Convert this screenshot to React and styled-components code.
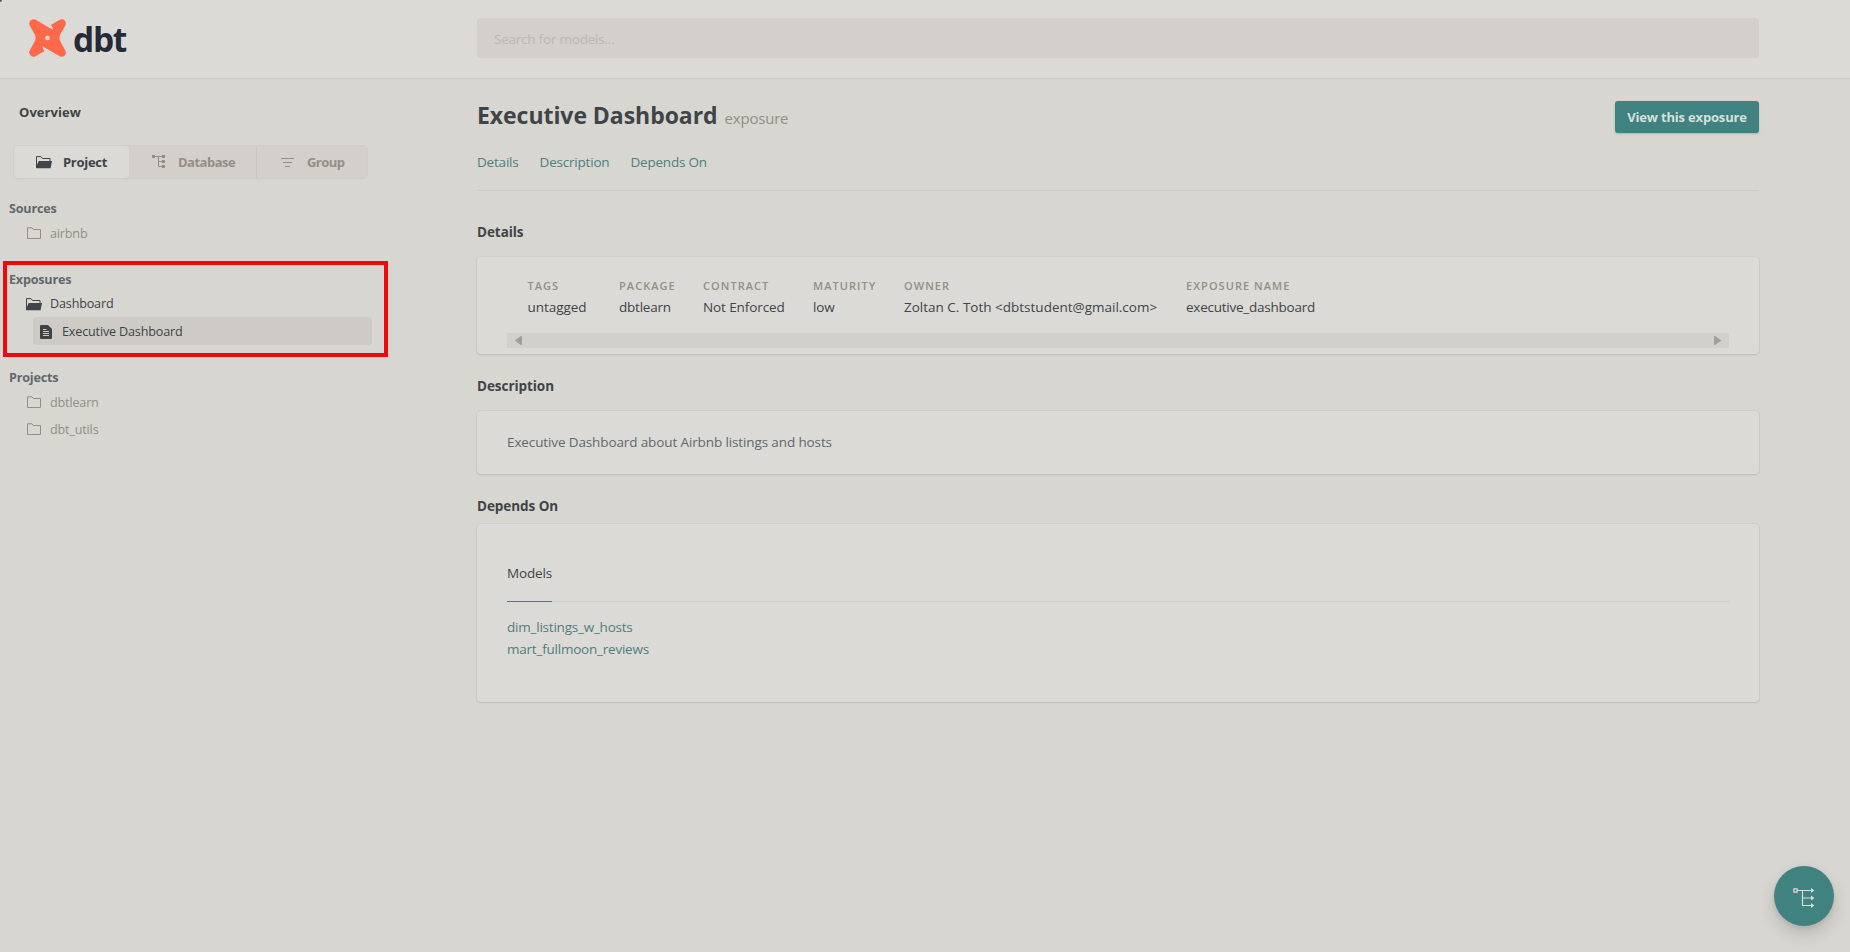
import React from "react";
import styled, { createGlobalStyle } from "styled-components";

const c = {
  page: "#d7d6d1",
  panel: "#dbdad6",
  line: "#cdccc7",
  muted: "#d3cfcb",
  dark: "#404446",
  slate: "#62686b",
  gray: "#948e85",
  teal: "#3f8280",
  link: "#4f7e7c",
};

const GlobalStyle = createGlobalStyle`
  * { box-sizing: border-box; }
  body {
    margin: 0;
    background: ${c.page};
    color: ${c.dark};
    font: 400 13.5px/20px "Open Sans", "Noto Sans", sans-serif;
    letter-spacing: -0.14px;
    overflow: hidden;
  }
`;

const Page = styled.div`
  height: 952px;
  display: flex;
  flex-direction: column;
`;
const WindowCorner = styled.span`
  position: absolute;
  left: 0;
  top: 0;
  width: 2px;
  height: 2px;
  background: #55555a;
  border-bottom-right-radius: 2px;
`;
const Header = styled.header`
  display: flex;
  height: 79px;
  flex: none;
  padding: 18px 0 0 29px;
  background: ${c.panel};
  border-bottom: 1px solid ${c.line};
`;
const Brand = styled.div`
  display: flex;
  width: 448px;
  gap: 7px;
  svg { margin-top: 1px; }
`;
const Wordmark = styled.span`
  margin-top: -2px;
  font-size: 33.5px;
  line-height: 46px;
  font-weight: 700;
  letter-spacing: -1.3px;
  color: #262a38;
`;
const Search = styled.div`
  width: 1282px;
  height: 40px;
  padding: 0 17px;
  border-radius: 4px;
  background: ${c.muted};
  color: #bab8b3;
  line-height: 43px;
  letter-spacing: -0.22px;
`;
const Body = styled.div`
  flex: 1;
  display: flex;
`;
const Sidebar = styled.aside`
  width: 477px;
  flex: none;
`;
const Overview = styled.div`
  margin: 23px 0 24px 19px;
  font-weight: 700;
  font-size: 13px;
  letter-spacing: 0.05px;
`;
const Tabs = styled.div`
  display: flex;
  width: 353px;
  height: 32px;
  margin-left: 14px;
  border-radius: 4px;
  background: ${c.muted};
  box-shadow: 0 0 0 1px #cfcec9, 0 1px 2px rgba(60, 50, 40, 0.08);
`;
const Tab = styled.div`
  display: flex;
  align-items: center;
  width: ${(p) => p.$width}px;
  padding-left: ${(p) => p.$inset}px;
  gap: ${(p) => p.$gap}px;
  border-radius: ${(p) => (p.$active ? "4px" : "0")};
  border-right: ${(p) => (p.$divided ? "1px solid #c9c7c2" : "none")};
  background: ${(p) => (p.$active ? c.panel : "transparent")};
  color: ${(p) => (p.$active ? c.dark : c.gray)};
  font-size: 13px;
  font-weight: 700;
  letter-spacing: ${(p) => p.$track}px;
  svg { flex: none; }
`;
const Group = styled.section`
  position: relative;
  padding-top: ${(p) => p.$top}px;
`;
const GroupTitle = styled.div`
  height: 22px;
  line-height: 22px;
  padding-left: 9px;
  color: ${c.slate};
  font-size: 12.6px;
  font-weight: 700;
  letter-spacing: -0.2px;
`;
const Item = styled.div`
  display: flex;
  align-items: center;
  width: fit-content;
  height: ${(p) => (p.$open ? 26 : 27)}px;
  margin-left: 26px;
  gap: 8px;
  color: ${(p) => (p.$open ? c.dark : c.gray)};
  font-size: 12.6px;
  letter-spacing: -0.17px;
  svg { flex: none; }
`;
const ActiveItem = styled(Item)`
  width: 339px;
  height: 28px;
  margin-left: 33px;
  padding: 2px 0 0 7px;
  gap: 10px;
  border-radius: 4px;
  background: #cecac5;
`;
const Highlight = styled.div`
  position: absolute;
  left: 3px;
  top: 14px;
  width: 385px;
  height: 96px;
  border: 4px solid #ee0a08;
`;
const Main = styled.main`
  width: 1282px;
  flex: none;
`;
const TitleRow = styled.div`
  display: flex;
  justify-content: space-between;
  height: 54px;
  padding-top: 18px;
`;
const Title = styled.h1`
  margin: 0;
  font-size: 23px;
  line-height: 36px;
  font-weight: 700;
  letter-spacing: -0.05px;
`;
const Kind = styled.small`
  margin-left: 7px;
  font-size: 15px;
  line-height: 1;
  font-weight: 400;
  letter-spacing: -0.2px;
  color: ${c.gray};
`;
const Button = styled.div`
  width: 144px;
  height: 32px;
  margin-top: 4px;
  border-radius: 3px;
  background: ${c.teal};
  color: #d5e0db;
  font-size: 13px;
  font-weight: 700;
  line-height: 32px;
  letter-spacing: -0.17px;
  text-align: center;
  box-shadow: 0 1px 2px rgba(60, 90, 90, 0.25);
`;
const Nav = styled.nav`
  display: flex;
  gap: 21px;
  height: 58px;
  padding-top: 19px;
  border-bottom: 1px solid ${c.line};
  color: ${c.link};
  letter-spacing: -0.2px;
`;
const Heading = styled.h6`
  margin: 0;
  height: 20px;
  margin-top: ${(p) => p.$top}px;
  margin-bottom: ${(p) => p.$bottom}px;
  font-size: 13.5px;
  line-height: 20px;
  font-weight: 700;
  letter-spacing: -0.06px;
`;
const Panel = styled.div`
  height: ${(p) => p.$height}px;
  padding: ${(p) => p.$pad}px 30px 0;
  border-radius: 4px;
  background: ${c.panel};
  box-shadow: 0 0 0 1px rgba(60, 50, 40, 0.04), 0 1px 2px rgba(60, 50, 40, 0.12);
`;
const Fields = styled.dl`
  display: grid;
  grid-template-columns: 91.5px 84px 110px 91px 282px auto;
  margin: 0 0 0 20.5px;
  height: 57px;
`;
const Term = styled.dt`
  color: ${c.gray};
  font-size: 11px;
  line-height: 20px;
  font-weight: 600;
  letter-spacing: 1.05px;
`;
const Value = styled.dd`
  margin: 1px 0 0;
  letter-spacing: ${(p) => p.$track ?? -0.1}px;
  white-space: nowrap;
`;
const ScrollTrack = styled.div`
  display: flex;
  justify-content: space-between;
  align-items: center;
  height: 15px;
  padding: 0 8px;
  background: #d1d0cb;
`;
const Text = styled.p`
  margin: 0;
  color: ${c.slate};
  letter-spacing: -0.12px;
`;
const ModelTabs = styled.div`
  display: flex;
  height: 39px;
  border-bottom: 1px solid ${c.line};
`;
const ModelTab = styled.div`
  height: 39px;
  width: 45px;
  border-bottom: 1px solid ${c.teal};
`;
const Links = styled.div`
  display: flex;
  flex-direction: column;
  padding-top: 14px;
  color: ${c.link};
  line-height: 22px;
  letter-spacing: -0.22px;
`;
const Fab = styled.div`
  position: fixed;
  right: 16px;
  bottom: 26px;
  display: flex;
  align-items: center;
  justify-content: center;
  width: 60px;
  height: 60px;
  padding-top: 3px;
  border-radius: 50%;
  background: ${c.teal};
  box-shadow: 0 8px 16px rgba(50, 45, 40, 0.18), 0 2px 5px rgba(50, 45, 40, 0.1);
`;

const LogoMark = () => (
  <svg width="37" height="38" viewBox="0 0 110 112">
    <path
      fill="#ff694a"
      d="M2 19Q-2 9 5 4Q12 -2 20 2L72 32Q71 23 65 17L91 2Q100 -2 106 4Q112 10 108 19L92 47Q89 55 92 64L108 93Q112 102 106 108Q100 114 91 110L39 80Q41 89 46 95L20 110Q11 114 5 108Q-2 102 2 93L18 64Q21 55 18 47Z"
    />
    <circle cx="55" cy="56" r="7" fill={c.panel} />
  </svg>
);
const FolderOpen = () => (
  <svg width="16" height="13" viewBox="0 0 16 13">
    <path d="M.5 12V.6H5L6.5 2.5H14V5" fill="none" stroke={c.dark} />
    <path d="M2.7 4.9H16L14.6 12.2H.5V10Z" fill={c.dark} />
  </svg>
);
const Folder = () => (
  <svg width="16" height="13" viewBox="0 0 16 13">
    <path d="M1.5 11.5V.8H6L7.3 2.5H14.5V11.5Z" fill="none" stroke={c.gray} />
  </svg>
);
const FileIcon = () => (
  <svg width="12" height="14" viewBox="0 0 12 14">
    <path d="M1 0H8L12 4V13Q12 14 11 14H1Q0 14 0 13V1Q0 0 1 0Z" fill={c.dark} />
    <path d="M3 4.5H6.5M3 6.5H9M3 8.5H9M3 10.5H9" stroke="#cecac5" />
  </svg>
);
const TreeIcon = () => (
  <svg width="14" height="14" viewBox="0 0 14 14">
    <path d="M2 1.5H11M6.5 1.5V11.5H11M6.5 6.5H11" fill="none" stroke={c.gray} />
    <path d="M0 0H3V3H0ZM10 0H13V3H10ZM10 5H13V8H10ZM10 10H13V13H10Z" fill={c.gray} />
  </svg>
);
const FilterIcon = () => (
  <svg width="14" height="9" viewBox="0 0 14 9">
    <path d="M0 .5H13M2 4.5H11M4 8.5H9" stroke={c.gray} />
  </svg>
);
const LineageIcon = () => (
  <svg width="22" height="20" viewBox="0 0 22 20">
    <g fill="none" stroke="#d5e0db" strokeWidth="1.2">
      <path d="M.9 .9H4.1V4.1H.9ZM4.5 2.5H18M9.5 2.5V17.5H18M9.5 10H18" />
    </g>
    <path d="M18 0L21.4 2.5L18 5ZM18 7.5L21.4 10L18 12.5ZM18 15L21.4 17.5L18 20Z" fill="#d5e0db" />
  </svg>
);
const Arrow = ({ left }) => (
  <svg width="7" height="9" viewBox="0 0 7 9">
    <path d={left ? "M7 0V9L6 9L0 4.8V4.2L6 0Z" : "M0 0V9L1 9L7 4.8V4.2L1 0Z"} fill="#a19e98" />
  </svg>
);

const fields = [
  ["TAGS", "untagged", -0.05],
  ["PACKAGE", "dbtlearn", -0.22],
  ["CONTRACT", "Not Enforced"],
  ["MATURITY", "low"],
  ["OWNER", "Zoltan C. Toth <dbtstudent@gmail.com>", 0],
  ["EXPOSURE NAME", "executive_dashboard", -0.24],
];

export default function App() {
  return (
    <Page>
      <GlobalStyle />
      <Header>
        <Brand>
          <LogoMark />
          <Wordmark>dbt</Wordmark>
        </Brand>
        <Search>Search for models...</Search>
      </Header>
      <Body>
        <Sidebar>
          <Overview>Overview</Overview>
          <Tabs>
            <Tab $active $width={115} $inset={22} $gap={11} $track={-0.3}>
              <FolderOpen />
              Project
            </Tab>
            <Tab $divided $width={128} $inset={23} $gap={12} $track={-0.5}>
              <TreeIcon />
              Database
            </Tab>
            <Tab $width={110} $inset={24} $gap={12} $track={-0.55}>
              <FilterIcon />
              Group
            </Tab>
          </Tabs>
          <Group $top={20}>
            <GroupTitle>Sources</GroupTitle>
            <Item><Folder />airbnb</Item>
          </Group>
          <Group $top={22}>
            <GroupTitle>Exposures</GroupTitle>
            <Item $open><FolderOpen />Dashboard</Item>
            <ActiveItem $open><FileIcon />Executive Dashboard</ActiveItem>
            <Highlight />
          </Group>
          <Group $top={22}>
            <GroupTitle>Projects</GroupTitle>
            <Item><Folder />dbtlearn</Item>
            <Item><Folder />dbt_utils</Item>
          </Group>
        </Sidebar>
        <Main>
          <TitleRow>
            <Title>
              Executive Dashboard<Kind>exposure</Kind>
            </Title>
            <Button>View this exposure</Button>
          </TitleRow>
          <Nav>
            <span>Details</span>
            <span>Description</span>
            <span>Depends On</span>
          </Nav>
          <Heading $top={31} $bottom={15}>Details</Heading>
          <Panel $height={97} $pad={19}>
            <Fields>
              {fields.map(([term, value, track]) => (
                <div key={term}>
                  <Term>{term}</Term>
                  <Value $track={track}>{value}</Value>
                </div>
              ))}
            </Fields>
            <ScrollTrack>
              <Arrow left />
              <Arrow />
            </ScrollTrack>
          </Panel>
          <Heading $top={22} $bottom={15}>Description</Heading>
          <Panel $height={63} $pad={21}>
            <Text>Executive Dashboard about Airbnb listings and hosts</Text>
          </Panel>
          <Heading $top={22} $bottom={8}>Depends On</Heading>
          <Panel $height={178} $pad={39}>
            <ModelTabs>
              <ModelTab>Models</ModelTab>
            </ModelTabs>
            <Links>
              <span>dim_listings_w_hosts</span>
              <span>mart_fullmoon_reviews</span>
            </Links>
          </Panel>
        </Main>
      </Body>
      <Fab>
        <LineageIcon />
      </Fab>
      <WindowCorner />
    </Page>
  );
}
